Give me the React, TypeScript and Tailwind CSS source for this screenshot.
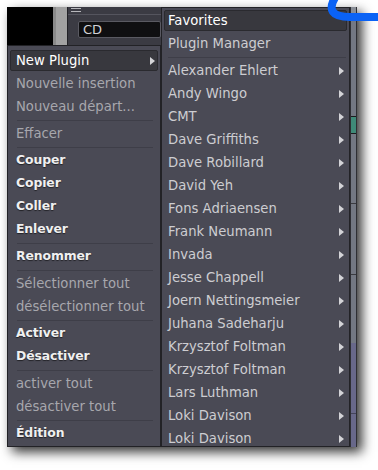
import React from "react";

type Row = { label?: string; kind: "hl" | "dis" | "bold" | "sep" | "item"; arrow?: boolean };

const leftItems: Row[] = [
  { label: "New Plugin", kind: "hl", arrow: true },
  { label: "Nouvelle insertion", kind: "dis" },
  { label: "Nouveau départ...", kind: "dis" },
  { kind: "sep" },
  { label: "Effacer", kind: "dis" },
  { kind: "sep" },
  { label: "Couper", kind: "bold" },
  { label: "Copier", kind: "bold" },
  { label: "Coller", kind: "bold" },
  { label: "Enlever", kind: "bold" },
  { kind: "sep" },
  { label: "Renommer", kind: "bold" },
  { kind: "sep" },
  { label: "Sélectionner tout", kind: "dis" },
  { label: "désélectionner tout", kind: "dis" },
  { kind: "sep" },
  { label: "Activer", kind: "bold" },
  { label: "Désactiver", kind: "bold" },
  { kind: "sep" },
  { label: "activer tout", kind: "dis" },
  { label: "désactiver tout", kind: "dis" },
  { kind: "sep" },
  { label: "Édition", kind: "bold" },
];

const authors = [
  "Alexander Ehlert",
  "Andy Wingo",
  "CMT",
  "Dave Griffiths",
  "Dave Robillard",
  "David Yeh",
  "Fons Adriaensen",
  "Frank Neumann",
  "Invada",
  "Jesse Chappell",
  "Joern Nettingsmeier",
  "Juhana Sadeharju",
  "Krzysztof Foltman",
  "Krzysztof Foltman",
  "Lars Luthman",
  "Loki Davison",
  "Loki Davison",
];

const subItems: Row[] = [
  { label: "Favorites", kind: "hl" },
  { label: "Plugin Manager", kind: "item" },
  { kind: "sep" },
  ...authors.map((a) => ({ label: a, kind: "item" as const, arrow: true })),
];

function Arrow() {
  return (
    <svg width="5" height="8" viewBox="0 0 5 8" className="shrink-0">
      <path d="M0 0 L5 4 L0 8 Z" fill="#d4d4d8" />
    </svg>
  );
}

function MenuRow({ row, side }: { row: Row; side: "left" | "sub" }) {
  const left = side === "left";
  if (row.kind === "sep") {
    return (
      <div className={`h-[4px] flex items-center ${left ? "pl-[9px] pr-[7px]" : "pl-[6px] pr-[3px]"}`}>
        <div className="h-px w-full bg-[#3e3e48]" />
      </div>
    );
  }
  if (row.kind === "hl") {
    return (
      <div className="h-[23px] px-[2px] py-px">
        <div
          className={`h-full flex items-center justify-between ${left ? "pl-[5px]" : "pl-[3px]"} pr-[2px] bg-[#38383e] border border-[#2a2a2f] rounded-[2px] text-white text-[13.2px]`}
        >
          <span>{row.label}</span>
          {row.arrow && <Arrow />}
        </div>
      </div>
    );
  }
  const color =
    row.kind === "dis"
      ? "text-[#a7a7ad] text-[13.2px]"
      : row.kind === "bold"
      ? "text-[#f0f0f0] font-bold text-[12.4px] tracking-[-0.1px] [text-shadow:0_1px_1px_rgba(0,0,0,0.55)]"
      : "text-[#cdcdd1] text-[13.2px]";
  return (
    <div className={`h-[23px] flex items-center justify-between ${left ? "pl-[8px]" : "pl-[6px]"} pr-[5px] ${color}`}>
      <span>{row.label}</span>
      {row.arrow && <Arrow />}
    </div>
  );
}

export default function App() {
  return (
    <div className="relative w-[378px] h-[470px] bg-white overflow-hidden font-['DejaVu_Sans',sans-serif]">
      <div className="pt-[7px] pl-[7px]">
        <div className="flex w-[350px] h-[440px] shadow-[5px_5px_11px_rgba(0,0,0,0.8)]">
          {/* left column */}
          <div className="w-[154px] flex flex-col">
            <div className="h-[38px] flex">
              <div className="w-[46px] bg-black" />
              <div className="w-[14px] bg-[#a2a2a2] border-l-[3px] border-[#8a8a8a]" />
              <div className="flex-1 bg-[#3b3b43] border-l border-[#222227] flex flex-col">
                <div className="h-[7px] pl-[3px] pt-[1px] flex flex-col gap-[2px]">
                  <div className="w-[10px] h-px bg-[#b8b8bc]" />
                  <div className="w-[10px] h-px bg-[#b8b8bc]" />
                </div>
                <div className="h-px bg-[#55555e]" />
                <div className="pt-[6px] pl-[10px]">
                  <div className="h-[17px] bg-[#0f0f11] border border-[#5a5a62] rounded-[2px] flex items-center pl-[4px] text-[13px] text-[#d2d2d6]">
                    CD
                  </div>
                </div>
              </div>
            </div>
            <div className="flex-1 bg-[#4a4a55] border border-[#222226] pt-[3px]">
              {leftItems.map((r, i) => (
                <MenuRow key={i} row={r} side="left" />
              ))}
            </div>
          </div>
          {/* submenu */}
          <div className="w-[189px] bg-[#4a4a55] border border-[#222226] pt-px overflow-hidden">
            {subItems.map((r, i) => (
              <MenuRow key={i} row={r} side="sub" />
            ))}
          </div>
          {/* scroll strip */}
          <div className="w-[7px] flex flex-col bg-[#737883] border-x border-[#2e2f34]">
            <div className="h-[8px] bg-[#8a8e96] border-b border-[#3a3a3f]" />
            <div className="h-[101px]" />
            <div className="h-[18px] bg-[#3f8a78] border-y border-[#1b1b1e]" />
            <div className="h-[70px] border-b border-[#3a3b40]" />
            <div className="h-[71px] border-b border-[#3a3b40]" />
            <div className="h-[68px]" />
            <div className="flex-1 bg-[#68688a] flex flex-col">
              <div className="h-[71px] border-b border-[#44445a]" />
            </div>
          </div>
        </div>
      </div>
      <svg className="absolute left-0 top-0" width="378" height="40">
        <path d="M336 -4 C 327 10, 332 17, 350 17 L 384 17" fill="none" stroke="#0a62f5" strokeWidth="8" strokeLinecap="round" />
      </svg>
    </div>
  );
}
